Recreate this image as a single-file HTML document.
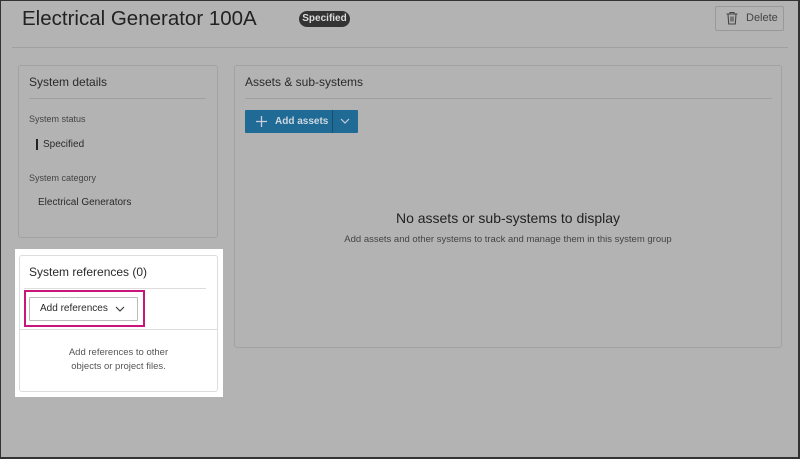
<!DOCTYPE html><html><head><style>
*{box-sizing:border-box;margin:0;padding:0}
body{width:800px;height:459px;background:#b3b3b3;font-family:"Liberation Sans",sans-serif;color:#2a2a2a;position:relative;overflow:hidden}
.a{position:absolute;line-height:1.2}
.frame{left:0;top:0;width:800px;height:459px;border:1px solid #333;border-right-width:2px;border-bottom-width:2px}
.panel{border:1px solid #a2a2a2;border-radius:3px;background:#b3b3b3}
</style></head><body>
<div class="a frame"></div>
<div class="a" style="left:22px;top:6px;font-size:20.5px;color:#222;line-height:26px">Electrical Generator 100A</div>
<div class="a" style="left:299px;top:11px;width:51px;height:16px;background:#333;border-radius:8px;color:#ddd;font-size:10px;font-weight:bold;text-align:center;line-height:16px">Specified</div>
<div class="a" style="left:715px;top:6px;width:69px;height:25px;border:1px solid #999;border-radius:2px;font-size:11px;color:#444;line-height:23px;padding-left:30px">Delete</div>
<svg class="a" style="left:725px;top:11px" width="14" height="14" viewBox="0 0 14 14" fill="none" stroke="#444" stroke-width="1.1"><path d="M1.5 3h11M5 3V1.5h4V3M3 3l.7 10h6.6L11 3M6 5.5v5M8 5.5v5"/></svg>
<div class="a" style="left:12px;top:47px;width:776px;height:1px;background:#a0a0a0"></div>
<div class="a panel" style="left:18px;top:65px;width:200px;height:173px"></div>
<div class="a" style="left:29px;top:75px;font-size:12px">System details</div>
<div class="a" style="left:29px;top:98px;width:177px;height:1px;background:#a0a0a0"></div>
<div class="a" style="left:29px;top:114px;font-size:9px;color:#444">System status</div>
<div class="a" style="left:36px;top:139px;width:2px;height:11px;background:#222"></div>
<div class="a" style="left:43px;top:139px;font-size:10px">Specified</div>
<div class="a" style="left:29px;top:173px;font-size:9px;color:#444">System category</div>
<div class="a" style="left:38px;top:197px;font-size:10px">Electrical Generators</div>
<div class="a panel" style="left:234px;top:65px;width:548px;height:283px"></div>
<div class="a" style="left:245px;top:75px;font-size:12px">Assets &amp; sub-systems</div>
<div class="a" style="left:245px;top:98px;width:527px;height:1px;background:#a0a0a0"></div>
<div class="a" style="left:245px;top:110px;width:113px;height:23px;background:#1f6b96;border-radius:1px"></div>
<div class="a" style="left:332px;top:110px;width:1px;height:23px;background:#164f70"></div>
<svg class="a" style="left:255px;top:115px" width="13" height="13" viewBox="0 0 13 13" stroke="#ccd" stroke-width="1.3"><path d="M6.5 1v11M1 6.5h11"/></svg>
<div class="a" style="left:275px;top:110px;font-size:10px;font-weight:bold;color:#cfd8de;line-height:23px">Add assets</div>
<svg class="a" style="left:340px;top:118px" width="10" height="7" viewBox="0 0 10 7" fill="none" stroke="#ccd" stroke-width="1.2"><path d="M1 1l4 4 4-4"/></svg>
<div class="a" style="left:234px;top:210px;width:548px;text-align:center;font-size:14px;color:#222">No assets or sub-systems to display</div>
<div class="a" style="left:234px;top:234px;width:548px;text-align:center;font-size:9.5px;color:#444">Add assets and other systems to track and manage them in this system group</div>
<div class="a" style="left:15px;top:249px;width:208px;height:148px;background:#fff"></div>
<div class="a" style="left:19px;top:255px;width:199px;height:137px;border:1px solid #ddd;border-radius:3px"></div>
<div class="a" style="left:29px;top:265px;font-size:12px">System references (0)</div>
<div class="a" style="left:24px;top:288px;width:182px;height:1px;background:#ddd"></div>
<div class="a" style="left:20px;top:329px;width:197px;height:1px;background:#ddd"></div>
<div class="a" style="left:24px;top:290px;width:121px;height:37px;border:2px solid #c8167a"></div>
<div class="a" style="left:29px;top:297px;width:109px;height:24px;border:1px solid #bbb;border-radius:1px;font-size:10px;line-height:22px;padding-left:10px">Add references</div>
<svg class="a" style="left:115px;top:306px" width="10" height="7" viewBox="0 0 10 7" fill="none" stroke="#333" stroke-width="1.1"><path d="M1 1l4 4 4-4"/></svg>
<div class="a" style="left:19px;top:346px;width:199px;text-align:center;font-size:9.5px;line-height:14px;color:#555">Add references to other<br>objects or project files.</div>
</body></html>
